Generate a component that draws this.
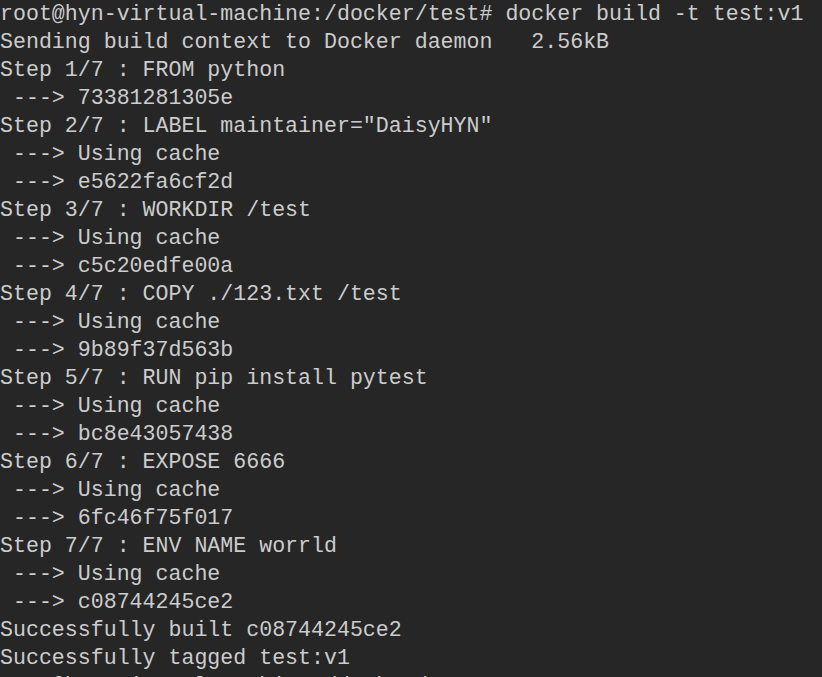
const lines = [
  'root@hyn-virtual-machine:/docker/test# docker build -t test:v1',
  'Sending build context to Docker daemon   2.56kB',
  'Step 1/7 : FROM python',
  ' ---> 73381281305e',
  'Step 2/7 : LABEL maintainer="DaisyHYN"',
  ' ---> Using cache',
  ' ---> e5622fa6cf2d',
  'Step 3/7 : WORKDIR /test',
  ' ---> Using cache',
  ' ---> c5c20edfe00a',
  'Step 4/7 : COPY ./123.txt /test',
  ' ---> Using cache',
  ' ---> 9b89f37d563b',
  'Step 5/7 : RUN pip install pytest',
  ' ---> Using cache',
  ' ---> bc8e43057438',
  'Step 6/7 : EXPOSE 6666',
  ' ---> Using cache',
  ' ---> 6fc46f75f017',
  'Step 7/7 : ENV NAME worrld',
  ' ---> Using cache',
  ' ---> c08744245ce2',
  'Successfully built c08744245ce2',
  'Successfully tagged test:v1',
  'root@hyn-virtual-machine:/docker/test# ',
];

export default function App() {
  return (
    <div className="w-[822px] h-[677px] overflow-hidden bg-[#262626] text-[#cccccc] font-['Liberation_Mono',monospace] text-[21.6px] leading-[28px]">
      {lines.map((l, i) => (
        <div key={i} className="whitespace-pre h-[28px]">
          {l}
        </div>
      ))}
    </div>
  );
}
